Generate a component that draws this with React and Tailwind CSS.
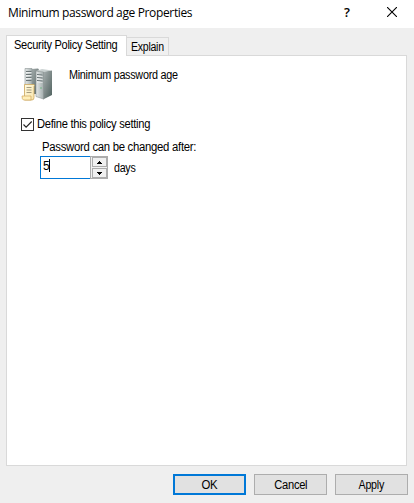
import React from "react";

function ServerIcon() {
  return (
    <svg width="33" height="34" viewBox="0 0 33 34" className="block shrink-0">
      <defs>
        <linearGradient id="side" x1="0" y1="0" x2="1" y2="1">
          <stop offset="0" stopColor="#a9b1b1" />
          <stop offset="0.5" stopColor="#7c8887" />
          <stop offset="1" stopColor="#4c5f5c" />
        </linearGradient>
        <linearGradient id="front" x1="0" y1="0" x2="1" y2="0">
          <stop offset="0" stopColor="#e4e8e8" />
          <stop offset="1" stopColor="#a4aeae" />
        </linearGradient>
        <linearGradient id="paper" x1="0" y1="0" x2="1" y2="1">
          <stop offset="0" stopColor="#fffbe2" />
          <stop offset="1" stopColor="#f8e3a8" />
        </linearGradient>
      </defs>
      <path d="M10 1l7-.5 1 1V26h-8z" fill="url(#side)" />
      <path d="M4 .5h7V25H4z" fill="url(#front)" stroke="#8b9494" strokeWidth=".6" />
      <path d="M5 3.500h5.500M5 6.500h5.500M5 9.500h5.500M5 12.500h5.500" stroke="#6b7576" strokeWidth="1" />
      <path d="M5 4.600h5.500M5 7.600h5.500M5 10.600h5.500" stroke="#fff" strokeWidth=".7" />
      <path d="M22 3.500l9-1V27l-9 4.500z" fill="url(#side)" />
      <path d="M15 3l6-2 10 1.500-9 1.500z" fill="#cbd2d2" />
      <path d="M15 3l7.500 1v27L15 28.500z" fill="url(#front)" stroke="#899292" strokeWidth=".6" />
      <path d="M16 6.500l5.500.6M16 9.500l5.500.6M16 12.500l5.500.6" stroke="#687375" strokeWidth="1" />
      <path d="M16 7.800l5.500.6M16 10.800l5.500.6M16 13.800l5.500.6" stroke="#fff" strokeWidth=".7" />
      <path d="M19 20h2" stroke="#6fb583" strokeWidth="1" />
      <path d="M3.500 16.500H13q1 1 0 2v11q0 2.500-2 2.500H3.500z" fill="url(#paper)" stroke="#cda75c" strokeWidth=".8" />
      <path d="M5.500 19.500h5M5.500 22h5M5.500 24.500h5" stroke="#8e8770" strokeWidth=".8" />
      <path d="M1 28h9v4H2.500Q1 31.500 1 28z" fill="#ffefb9" stroke="#cda75c" strokeWidth=".7" />
    </svg>
  );
}

function Label({ children, className }) {
  return <span className={"inline-block whitespace-nowrap " + className}>{children}</span>;
}

function Button({ children, primary }) {
  return (
    <button
      className={
        "flex h-[21px] w-[73px] items-center justify-center bg-[#e1e1e1] leading-[14px] " +
        (primary ? "border-2 border-[#0078d7]" : "border border-[#adadad]")
      }
    >
      {children}
    </button>
  );
}

function Spin({ up }) {
  return (
    <button className="flex h-[10px] w-[15px] items-center justify-center border border-[#acacac] bg-[#f0f0f0]">
      <svg width="5" height="3" viewBox="0 0 5 3" shapeRendering="crispEdges">
        <path d={up ? "M2 0h1v1h1v1h1v1H0V2h1V1h1z" : "M0 0h5v1H4v1H3v1H2V2H1V1H0z"} fill="#000" />
      </svg>
    </button>
  );
}

export default function App() {
  return (
    <div className="flex h-[503px] w-[414px] flex-col overflow-hidden bg-[#efefef] font-['Liberation_Sans',Arial,sans-serif] text-[12px] leading-[14px] tracking-[-0.3px] text-black">
      <header className="flex h-7 shrink-0 bg-white pl-2">
        <h1 className="flex-1 whitespace-nowrap pt-[4px] font-['Open_Sans','Noto_Sans',sans-serif] text-[12px] leading-[18px] tracking-[-0.36px]">
          Minimum password age Properties
        </h1>
        <span className="w-[43px] pt-[3px] font-['Open_Sans',sans-serif] text-[13px] font-semibold leading-[18px]">?</span>
        <svg width="10" height="10" viewBox="0 0 10 10" className="mr-[17px] mt-[7px]">
          <path d="M0 0l10 10M10 0L0 10" stroke="#000" strokeWidth="1.1" />
        </svg>
      </header>

      <nav className="flex h-[27px] shrink-0 items-end pl-[6px]">
        <div className="z-10 -mb-px h-[21px] w-[121px] border border-b-0 border-[#d9d9d9] bg-white pl-[7px] pt-[2px]">
          <Label className="origin-left scale-x-[0.92]">Security Policy Setting</Label>
        </div>
        <div className="h-[18px] w-[42px] border border-b-0 border-l-0 border-[#d9d9d9] bg-[#f0f0f0] pl-1 pt-[2px]">
          <Label className="origin-left scale-x-[0.88]">Explain</Label>
        </div>
      </nav>

      <main className="ml-[6px] flex h-[411px] w-[401px] shrink-0 flex-col border border-[#d9d9d9] bg-white">
        <div className="flex pl-[14px] pt-[12px]">
          <ServerIcon />
          <Label className="ml-[15px] origin-left scale-x-[0.9]">Minimum password age</Label>
        </div>
        <label className="mt-[15px] flex h-[14px] items-center pl-[14px]">
          <span className="flex size-[13px] items-center justify-center border border-[#333] bg-white">
            <svg width="11" height="11" viewBox="0 0 11 11">
              <path d="M1.500 5.500l2.600 2.600L9.700 2.500" fill="none" stroke="#222" strokeWidth="1.100" />
            </svg>
          </span>
          <Label className="ml-[3px] origin-left scale-x-[0.93]">Define this policy setting</Label>
        </label>
        <div className="mt-[9px] h-[14px] pl-[35px]">
          <Label className="origin-left scale-x-[0.945]">Password can be changed after:</Label>
        </div>
        <div className="mt-[2px] flex pl-[33px]">
          <div className="flex h-[23px] w-[50px] border border-r-0 border-[#0078d7] bg-white pl-[2px] pt-[2px]">
            <span className="w-[6px]">5</span>
            <span className="h-[13px] w-px bg-black" />
          </div>
          <div className="flex h-[23px] w-[18px] flex-col justify-between border border-[#acacac] bg-[#f0f0f0] pl-px">
            <Spin up />
            <Spin />
          </div>
          <Label className="ml-[6px] mt-[5px] origin-left scale-x-[0.89]">days</Label>
        </div>
      </main>

      <footer className="mt-2 flex justify-end gap-2 pr-[6px]">
        <Button primary><Label className="scale-x-[0.95]">OK</Label></Button>
        <Button><Label className="scale-x-[0.93]">Cancel</Label></Button>
        <Button><Label className="scale-x-[0.89]">Apply</Label></Button>
      </footer>
    </div>
  );
}
